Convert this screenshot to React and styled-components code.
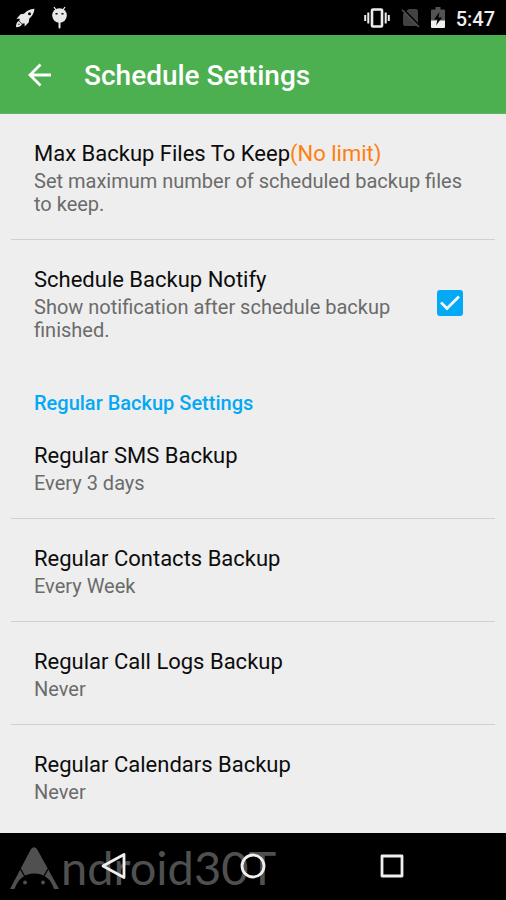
import React from 'react';
import styled, { createGlobalStyle, css } from 'styled-components';

const GlobalStyle = createGlobalStyle`
  *, *::before, *::after { box-sizing: border-box; }
  body {
    margin: 0;
    background: #000;
    font-family: Roboto, "Noto Sans", sans-serif;
  }
`;

const Screen = styled.div`
  display: flex;
  flex-direction: column;
  min-height: 100vh;
  background: #eeeeee;
`;

const StatusBar = styled.div`
  display: flex;
  align-items: center;
  justify-content: space-between;
  height: 35px;
  padding: 0 11px 0 15px;
  background: #000;
  color: #ededed;
`;

const StatusGroup = styled.div`
  display: flex;
  align-items: center;
  gap: ${({ $gap }) => $gap}px;
`;

const Clock = styled.time`
  font-size: 20px;
  line-height: 24px;
  font-weight: 500;
  padding-top: 2px;
`;

const AppBar = styled.header`
  display: flex;
  align-items: center;
  gap: 31px;
  height: 79px;
  padding: 2px 25px 0;
  background: #4caf50;
  border-bottom: 1px solid #5fb562;
  color: #fff;
`;

const IconButton = styled.button`
  display: flex;
  align-items: center;
  justify-content: center;
  padding: 0;
  border: 0;
  background: none;
  color: inherit;
  cursor: pointer;
`;

const Title = styled.h1`
  margin: 0;
  padding-top: 2px;
  font-size: 28px;
  line-height: 34px;
  font-weight: 500;
`;

const Content = styled.main`
  flex: 1;
`;

const rowStyles = css`
  display: flex;
  align-items: center;
  width: 100%;
  padding: 26px 23px 23px;
  border: 0;
  background: none;
  font-family: inherit;
  text-align: left;
  cursor: pointer;
`;

const List = styled.ul`
  margin: 0;
  padding: 0 11px;
  list-style: none;
`;

const Item = styled.li`
  & + & { border-top: 1px solid #d0d0d0; }
`;

const RowButton = styled.button`${rowStyles}`;
const RowLabel = styled.label`
  ${rowStyles}
  padding-right: 32px;
`;

const RowText = styled.span`
  display: flex;
  flex: 1;
  flex-direction: column;
  gap: 3px;
`;

const RowTitle = styled.span`
  font-size: 22px;
  line-height: 27px;
  color: #0c0c0c;
`;

const Accent = styled.span`
  color: #ff7f0e;
`;

const Summary = styled.span`
  font-size: 20px;
  line-height: 23px;
  color: #6b6b6b;
`;

const SectionTitle = styled.h2`
  margin: 0;
  padding: 26px 34px 1px;
  font-size: 20px;
  line-height: 24px;
  font-weight: 500;
  color: #03a9f4;
`;

const CheckSlot = styled.span`
  display: grid;
  width: 26px;
  height: 26px;
  margin: 0 0 3px 24px;

  > * { grid-area: 1 / 1; }
`;

const Checkbox = styled.input`
  appearance: none;
  width: 26px;
  height: 26px;
  margin: 0;
  border: 2px solid #757575;
  border-radius: 3px;
  cursor: pointer;

  &:checked {
    border-color: #03a9f4;
    background: #03a9f4;
  }
  &:not(:checked) + svg { visibility: hidden; }
`;

const CheckMark = styled.svg`
  pointer-events: none;
`;

const NavBar = styled.nav`
  position: relative;
  display: flex;
  align-items: center;
  justify-content: center;
  gap: 18%;
  height: 67px;
  padding-bottom: 1px;
  background: #000;
  color: #efefef;
`;

const NavButton = styled(IconButton)`
  position: relative;
  width: 48px;
  height: 48px;
`;

const Watermark = styled.div`
  position: absolute;
  left: 10px;
  top: 11px;
  display: flex;
  align-items: flex-end;
  gap: 2px;
  color: #505050;
`;

const WatermarkText = styled.span`
  font-family: Lato, sans-serif;
  font-size: 47px;
  line-height: 46px;
`;

const RocketIcon = () => (
  <svg width="21" height="20" viewBox="0 0 21 20" aria-hidden="true">
    <path fill="#e8e8e8" fillRule="evenodd" d="M19.500 .8C15 1 11.500 2.800 9 5.800L5.500 6.300 1.500 10.800 4.800 10.800 4.300 13 7.200 15.800 9.500 15.300 9.700 18.500 13.800 14.200 14.200 10.800C17 8.300 19.200 5 19.500 .8ZM14.500 4.200a1.500 1.500 0 1 1 0 3 1.500 1.500 0 0 1 0-3Z" />
    <path fill="#e8e8e8" fillRule="evenodd" d="M3.500 13 7 16.300C6 18.300 4 19.200 1 19.200 1 16.500 1.700 14 3.500 13ZM3.800 15.300 3.200 17.100 4.900 16.400Z" />
  </svg>
);

const AndroidIcon = () => (
  <svg width="17" height="23" viewBox="0 0 17 23" aria-hidden="true">
    <path stroke="#e8e8e8" strokeWidth="1.300" d="m3 1 2 3M14 1l-2 3" />
    <circle cx="8.500" cy="9.500" r="7.300" fill="#e8e8e8" />
    <path stroke="#e8e8e8" strokeWidth="2" strokeLinecap="round" d="M8.500 16v5.500" />
    <path fill="#000" d="M4.500 7h2v1.600h-2zM10.500 7h2v1.600h-2z" />
  </svg>
);

const VibrateIcon = () => (
  <svg width="26" height="20" viewBox="0 0 26 20" fill="none" stroke="#ededed" aria-hidden="true">
    <rect x="8" y="1.500" width="10" height="17" rx="1" strokeWidth="2.600" />
    <path strokeWidth="2" d="M1.200 7v6M4.300 4.500v11M21.700 4.500v11M24.800 7v6" />
  </svg>
);

const NoSimIcon = () => (
  <svg width="19" height="20" viewBox="0 0 19 20" aria-hidden="true">
    <path fill="#424242" d="M7.500 1H15a2 2 0 0 1 2 2v15H4a2 2 0 0 1-2-2V6Z" />
    <path stroke="#000" strokeWidth="2" d="M2 1 18.500 18" />
    <path stroke="#505050" strokeWidth="1.600" d="M1 1.800 18 19" />
  </svg>
);

const BatteryIcon = () => (
  <svg width="14" height="21" viewBox="0 0 14 21" aria-hidden="true">
    <path fill="#535353" d="M4.500 0h5v2.500H13a1 1 0 0 1 1 1V14H0V3.500a1 1 0 0 1 1-1h3.500Z" />
    <path fill="#efefef" d="M0 13.500h14V20a1 1 0 0 1-1 1H1a1 1 0 0 1-1-1Z" />
    <path fill="#000" d="M8.500 5 3 12.500h3.500L5 18.500l6-8H7.500Z" />
  </svg>
);

const BackArrow = () => (
  <svg width="28" height="28" viewBox="0 0 28 28" fill="none" stroke="currentColor" strokeWidth="2.800" aria-hidden="true">
    <path d="M26 14H6M15.500 3.500 5 14l10.500 10.500" />
  </svg>
);

const WatermarkLogo = () => (
  <svg width="49" height="43" viewBox="0 0 49 43" aria-hidden="true">
    <path fill="#505050" d="M0 42 21 2Q24 -1.500 27 2L49 42H44Q39 26.500 24.200 26.500 10 26.500 4.500 42Z" />
    <path fill="none" stroke="#000" strokeWidth="1.300" d="m10.500 22 4 7M38 22l-4 7" />
    <circle cx="15" cy="35.500" r="1.900" fill="#505050" />
    <circle cx="33" cy="35.500" r="1.900" fill="#505050" />
  </svg>
);

const regularBackups = [
  { title: 'Regular SMS Backup', summary: 'Every 3 days' },
  { title: 'Regular Contacts Backup', summary: 'Every Week' },
  { title: 'Regular Call Logs Backup', summary: 'Never' },
  { title: 'Regular Calendars Backup', summary: 'Never' },
];

function PreferenceText({ title, value, summary }) {
  return (
    <RowText>
      <RowTitle>{title}{value && <Accent>{value}</Accent>}</RowTitle>
      <Summary>{summary}</Summary>
    </RowText>
  );
}

export default function App() {
  return (
    <>
      <GlobalStyle />
      <Screen>
        <StatusBar>
          <StatusGroup $gap={15}><RocketIcon /><AndroidIcon /></StatusGroup>
          <StatusGroup $gap={11}>
            <VibrateIcon /><NoSimIcon /><BatteryIcon /><Clock>5:47</Clock>
          </StatusGroup>
        </StatusBar>
        <AppBar>
          <IconButton type="button" aria-label="Back"><BackArrow /></IconButton>
          <Title>Schedule Settings</Title>
        </AppBar>
        <Content>
          <List>
            <Item>
              <RowButton type="button">
                <PreferenceText
                  title="Max Backup Files To Keep"
                  value="(No limit)"
                  summary="Set maximum number of scheduled backup files to keep."
                />
              </RowButton>
            </Item>
            <Item>
              <RowLabel htmlFor="backup-notify">
                <PreferenceText
                  title="Schedule Backup Notify"
                  summary="Show notification after schedule backup finished."
                />
                <CheckSlot>
                  <Checkbox id="backup-notify" type="checkbox" defaultChecked />
                  <CheckMark width="26" height="26" viewBox="0 0 26 26" fill="none" stroke="#f4f4f4" strokeWidth="2.800" aria-hidden="true">
                    <path d="m4 12.500 6 6L22 6.500" />
                  </CheckMark>
                </CheckSlot>
              </RowLabel>
            </Item>
          </List>
          <SectionTitle>Regular Backup Settings</SectionTitle>
          <List>
            {regularBackups.map((item) => (
              <Item key={item.title}>
                <RowButton type="button">
                  <PreferenceText {...item} />
                </RowButton>
              </Item>
            ))}
          </List>
        </Content>
        <NavBar aria-label="System">
          <Watermark><WatermarkLogo /><WatermarkText>ndroid30T</WatermarkText></Watermark>
          <NavButton type="button" aria-label="Back">
            <svg width="28" height="28" viewBox="0 0 28 28" fill="none" stroke="currentColor" strokeWidth="2.800" strokeLinejoin="round">
              <path d="M24 2.500v23L3 14Z" />
            </svg>
          </NavButton>
          <NavButton type="button" aria-label="Home">
            <svg width="28" height="28" viewBox="0 0 28 28" fill="none" stroke="currentColor" strokeWidth="2.800">
              <circle cx="14" cy="14" r="11" />
            </svg>
          </NavButton>
          <NavButton type="button" aria-label="Recent apps">
            <svg width="28" height="28" viewBox="0 0 28 28" fill="none" stroke="currentColor" strokeWidth="2.800" strokeLinejoin="round">
              <rect x="4" y="4" width="20" height="20" />
            </svg>
          </NavButton>
        </NavBar>
      </Screen>
    </>
  );
}
